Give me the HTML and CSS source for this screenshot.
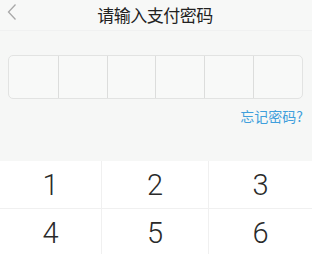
FILE: index.html
```html
<!DOCTYPE html>
<html lang="zh-CN">
<head>
    <meta charset="UTF-8">
    <meta name="viewport" content="width=device-width, initial-scale=1.0">
    <title>请输入支付密码</title>
    <link rel="stylesheet" href="styles.css">
</head>
<body>
    <div class="panel">
        <div class="header">
            <span class="back">
                <svg width="10" height="18" viewBox="0 0 10 18">
                    <path d="M8.5 1.5 L1.5 9 L8.5 16.5" fill="none" stroke="#a8a8a8" stroke-width="1.3"/>
                </svg>
            </span>
            <h1>请输入支付密码</h1>
        </div>

        <div class="body">
            <div class="code-box">
                <div class="cell"></div>
                <div class="cell"></div>
                <div class="cell"></div>
                <div class="cell"></div>
                <div class="cell"></div>
                <div class="cell"></div>
            </div>
            <div class="forgot">忘记密码?</div>
        </div>

        <div class="keypad">
            <div class="key">1</div>
            <div class="key">2</div>
            <div class="key">3</div>
            <div class="key">4</div>
            <div class="key">5</div>
            <div class="key">6</div>
        </div>
    </div>
</body>
</html>
```

FILE: styles.css
```css
body {
    margin: 0;
    background-color: #fff;
    font-family: "Noto Sans CJK SC", "Noto Sans", sans-serif;
}

.panel {
    width: 312px;
}

.header {
    height: 30px;
    display: flex;
    align-items: center;
    justify-content: center;
    position: relative;
    background-color: #f7f8f7;
    border-bottom: 1px solid #f0f1f1;
}

.back {
    position: absolute;
    left: 7px;
    top: 2px;
}

h1 {
    margin: 0 0 2px -2px;
    font-size: 17px;
    font-weight: normal;
    color: #222;
    letter-spacing: -0.5px;
}

.body {
    height: 130px;
    padding: 24px 9px 0 8px;
    box-sizing: border-box;
    background-color: #f6f7f6;
}

.code-box {
    display: grid;
    grid-template-columns: repeat(6, 1fr);
    height: 42px;
    border: 1px solid #e2e3e2;
    border-radius: 5px;
    background-color: #f8f9f8;
    overflow: hidden;
}

.cell {
    border-left: 1px solid #dcdddc;
}

.cell:first-child {
    border-left: none;
}

.forgot {
    margin-top: 7px;
    text-align: right;
    font-size: 14px;
    color: #3f9fdc;
}

.keypad {
    display: grid;
    grid-template-columns: 102px 107px 103px;
    background-color: #fff;
}

.key {
    height: 48px;
    display: flex;
    align-items: center;
    justify-content: center;
    font-family: Roboto, sans-serif;
    font-weight: 300;
    font-size: 29px;
    color: #2a2a2a;
    border-bottom: 1px solid #f0f0f0;
    border-right: 1px solid #f0f0f0;
    box-sizing: border-box;
}

.key:nth-child(3n) {
    border-right: none;
}
```
